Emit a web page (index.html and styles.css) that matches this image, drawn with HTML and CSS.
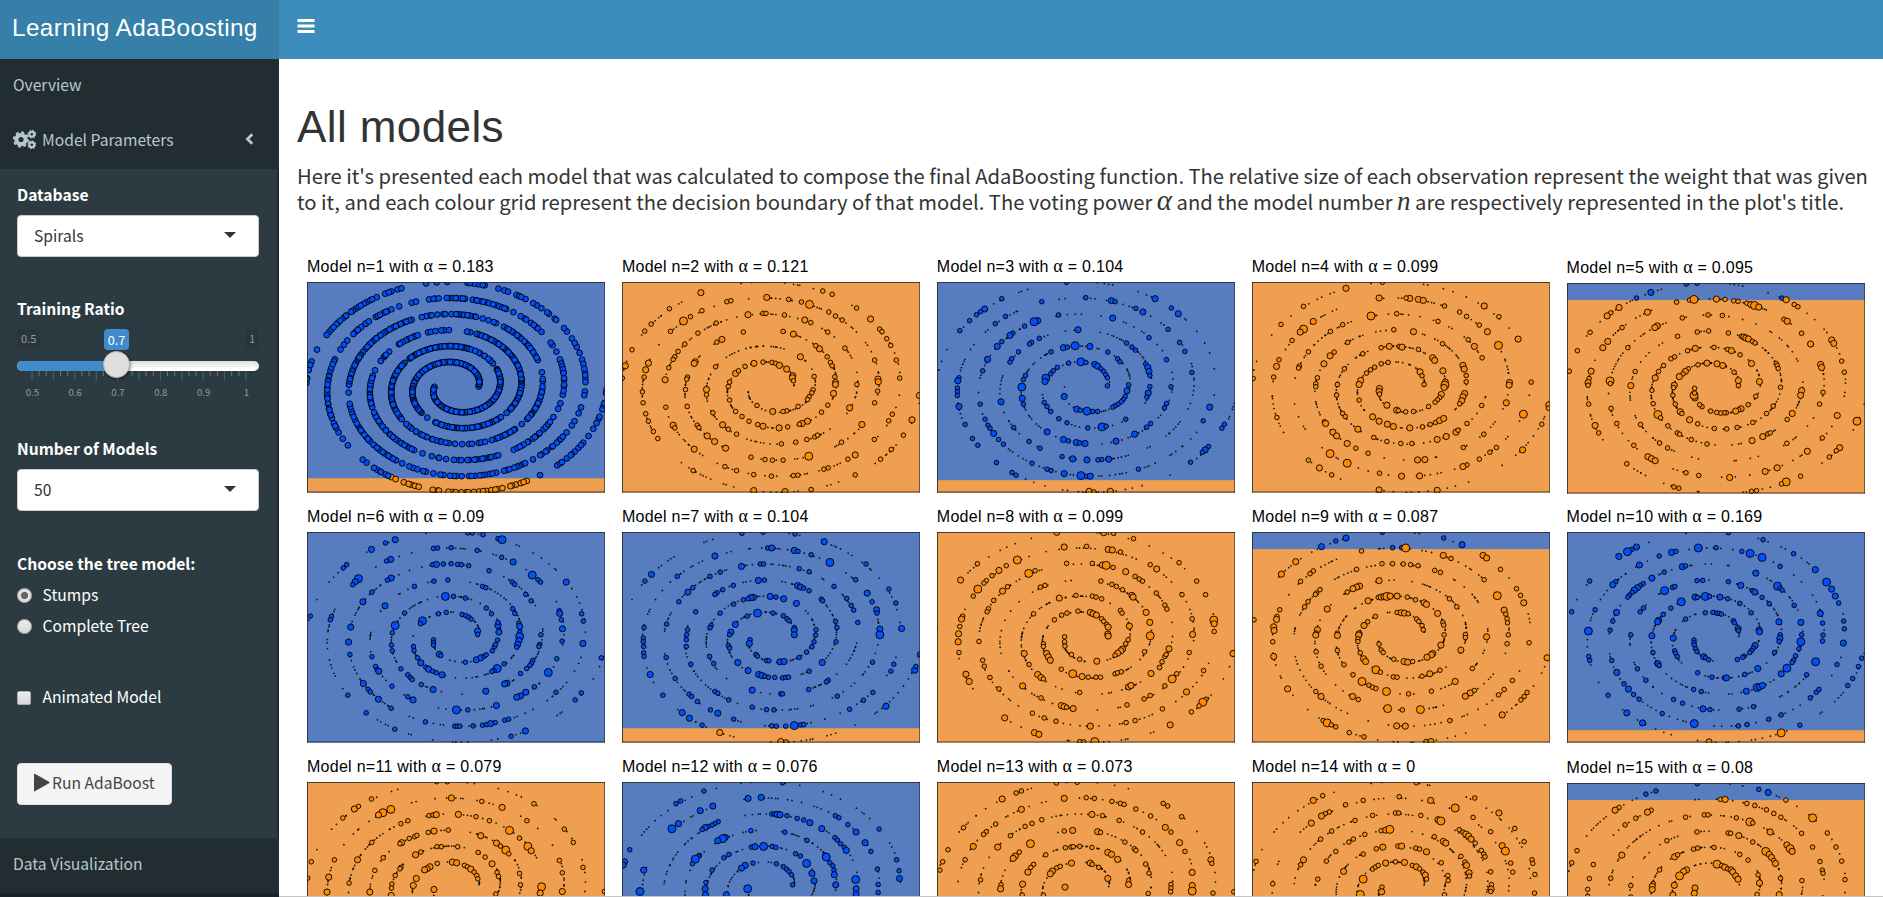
FILE: index.html
```html
<!DOCTYPE html>
<html lang="en">
<head>
<meta charset="utf-8">
<title>Learning AdaBoosting</title>
<link rel="stylesheet" href="styles.css">
</head>
<body>
<header class="topbar">
  <div class="logo">Learning AdaBoosting</div>
  <nav class="navbar">
    <svg class="burger" viewBox="0 0 18 14" width="18" height="14"><path d="M.5 1.5h17M.5 7h17M.5 12.4h17" stroke="#fff" stroke-width="3"/></svg>
  </nav>
</header>
<div class="body">
  <aside class="sidebar">
    <a class="item">Overview</a>
    <a class="item">
      <svg class="gears" viewBox="0 0 23 19" width="23" height="19" fill="none" stroke="#b8c7ce">
        <circle cx="8" cy="9.5" r="4.6" stroke-width="4"/>
        <circle cx="8" cy="9.5" r="7.1" stroke-width="2.2" stroke-dasharray="3 2.576"/>
        <circle cx="18.8" cy="4.2" r="2.4" stroke-width="2.2"/>
        <circle cx="18.8" cy="4.2" r="3.7" stroke-width="1.3" stroke-dasharray="1.6 1.306"/>
        <circle cx="18.8" cy="14.8" r="2.4" stroke-width="2.2"/>
        <circle cx="18.8" cy="14.8" r="3.7" stroke-width="1.3" stroke-dasharray="1.6 1.306"/>
      </svg>
      <span>Model Parameters</span>
      <svg class="angle" viewBox="0 0 9 12" width="9" height="12"><path d="M7.3 1.3L2.4 6l4.9 4.7" fill="none" stroke="#b8c7ce" stroke-width="2.8"/></svg>
    </a>
    <section class="submenu">
      <label class="label first">Database</label>
      <div class="select"><span>Spirals</span><i class="caret"></i></div>
      <label class="label ratio">Training Ratio</label>
      <div class="slider">
        <div class="bounds"><span>0.5</span><b>0.7</b><span>1</span></div>
        <div class="track"><div class="fill"></div><div class="handle"></div></div>
        <svg class="ticks" id="ticks" width="242" height="11"></svg>
        <div class="ticklabels"><span>0.5</span><span>0.6</span><span>0.7</span><span>0.8</span><span>0.9</span><span>1</span></div>
      </div>
      <label class="label number">Number of Models</label>
      <div class="select"><span>50</span><i class="caret"></i></div>
      <label class="label tree">Choose the tree model:</label>
      <div class="option"><i class="radio on"></i><span>Stumps</span></div>
      <div class="option"><i class="radio"></i><span>Complete Tree</span></div>
      <div class="option check"><i class="box"></i><span>Animated Model</span></div>
      <button class="run"><svg viewBox="0 0 17 19" width="17" height="19"><path d="M1 1.6Q1 .2 2.3.9L16 8.7q1 .8 0 1.6L2.3 18.1Q1 18.8 1 17.4z" fill="#444"/></svg><span>Run AdaBoost</span></button>
    </section>
    <a class="item">Data Visualization</a>
  </aside>
  <main class="content">
    <h1>All models</h1>
    <p class="intro"><span class="line">Here it's presented each model that was calculated to compose the final AdaBoosting function. The relative size of each observation represent the weight that was given</span><span class="line">to it, and each colour grid represent the decision boundary of that model. The voting power <i class="alpha">α</i> and the model number <i>n</i> are respectively represented in the plot's title.</span></p>
    <div class="grid" id="grid"></div>
  </main>
</div>
<script src="plots.js"></script>
</body>
</html>
```
FILE: styles.css
```css
* { box-sizing: border-box; }
body { margin: 0; height: 897px; overflow: hidden; display: flex; flex-direction: column; background: #fff; color: #333; font-family: "Noto Sans CJK SC", "Noto Sans", sans-serif; font-size: 15.65px; }
.topbar { display: flex; height: 59px; flex: none; }
.logo { width: 279px; padding-left: 12px; background: #367fa9; color: #fff; font: 24.3px/55px "Liberation Sans", Arial, sans-serif; letter-spacing: .4px; white-space: nowrap; }
.navbar { flex: 1; background: #3c8dbc; padding: 19px 0 0 18px; }
.burger { display: block; }
.body { display: flex; height: 838px; }
.sidebar { width: 279px; flex: none; background: #222d32; border-bottom: 4px solid #1b2428; color: #b8c7ce; overflow: hidden; }
.item { display: flex; align-items: center; height: 55px; padding: 0 25px 3px 13px; line-height: 24px; white-space: nowrap; }
.gears { margin: -1px 6px 0 0; }
.angle { margin-left: auto; margin-top: -3px; }
.submenu { height: 669px; width: 277px; background: #2c3b41; padding: 14px 18px 0 17px; color: #fff; display: flex; flex-direction: column; }
.label { display: block; font-weight: 700; height: 24px; line-height: 24px; white-space: nowrap; }
.first { margin-bottom: 8px; }
.select { height: 42px; flex: none; border: 1px solid #ccc; border-radius: 4px; background: #fff; color: #333; display: flex; align-items: center; justify-content: space-between; padding: 0 22px 2px 16px; }
.caret { border: 6px solid transparent; border-top-color: #333; border-bottom: 0; margin-top: -1px; }
.ratio { margin-top: 40px; }
.slider { margin-top: 8px; height: 74px; }
.bounds { display: flex; justify-content: space-between; height: 32px; font-size: 11px; line-height: 19px; }
.bounds span { height: 19px; padding: 0 4px; border-radius: 4px; background: #293539; color: #999; }
.bounds b { height: 21px; width: 25px; margin-left: -52px; text-align: center; line-height: 22px; font-weight: 400; font-size: 12.6px; color: #fff; background: #428bca; border-radius: 4px; }
.track { height: 10px; border-radius: 8px; background: linear-gradient(#dedede, #fff 80%); position: relative; }
.fill { width: 99px; height: 10px; border-radius: 8px 0 0 8px; background: #428bca; }
.handle { position: absolute; left: 86px; top: -10px; width: 27px; height: 27px; border-radius: 50%; background: #dedede; border: 1px solid #b5b5b5; box-shadow: 1px 1px 3px rgba(0,0,0,.4); }
.ticks { display: block; }
.ticklabels { display: flex; margin-top: 2px; margin-left: -6px; font-size: 9.6px; line-height: 16px; color: #999; }
.ticklabels span { width: 42.8px; text-align: center; flex: none; }
.number { margin-top: 34px; margin-bottom: 8px; }
.tree { margin-top: 41px; margin-bottom: 4px; }
.option { display: flex; align-items: center; height: 31px; line-height: 24px; gap: 10.5px; white-space: nowrap; }
.option span { margin-top: -2px; }
.radio { width: 15px; height: 15px; border-radius: 50%; border: 1px solid #b0b0b0; background: linear-gradient(#ececec, #d8d8d8); }
.radio.on { background: radial-gradient(circle, #666 0 3.2px, #e0e0e0 4px); }
.check { margin-top: 40px; gap: 11.5px; }
.box { width: 14px; height: 14px; border: 1px solid #aaa; border-radius: 2px; background: linear-gradient(#ececec, #d6d6d6); }
.run { margin-top: 50px; width: 155px; height: 42px; flex: none; display: flex; align-items: center; padding: 0 0 2px 15px; gap: 2px; border: 1px solid #ddd; border-radius: 4px; background: #f4f4f4; color: #444; font: 15.65px/24px "Noto Sans CJK SC", sans-serif; white-space: nowrap; }
.run svg { margin-top: -1px; }
.content { flex: 1; padding: 43px 0 0 18px; overflow: hidden; border-bottom: 1px solid #c4c4c4; }
h1 { margin: 0; font: 44px/50px "Liberation Sans", Arial, sans-serif; letter-spacing: .4px; }
.intro { margin: 11px 0 0; font-size: 20.2px; line-height: 26px; }
.line { display: block; height: 26px; white-space: nowrap; }
.line i { font: italic 27px/20px "Liberation Serif", serif; }
.line .alpha { font-size: 29px; }
.grid { display: grid; grid-template-columns: repeat(5, 298.4px); column-gap: 16.5px; margin: 39px 0 0 10px; }
.cell { height: 250px; }
.cell.low { padding-top: 1px; }
.title { height: 28px; font: 16px/25px "Liberation Sans", Arial, sans-serif; letter-spacing: .27px; color: #000; white-space: nowrap; }
.title span { font-family: "Liberation Serif", serif; font-size: 18px; line-height: 20px; }
.plot { display: block; }
```
FILE: plots.js
```js
// Runs of observations along the spiral arms: x1,y1,x2,y2,count (counter-clockwise).
const RUNS = `565,410,473,338,60 468,338,380,384,30 380,384,390,487,38 395,489,412,503,2 435,519,447,525,3 455,526,624,505,35
630,500,647,488,2 655,477,692,385,24 692,385,655,307,18 655,307,560,252,22 541,247,531,245,2 477,241,413,246,6 384,257,328,284,10
298,306,268,332,5 257,362,257,362,1 247,378,246,472,17 252,488,372,602,24 398,610,398,610,1 425,620,514,632,7 532,631,625,617,12
670,599,785,518,17 795,503,808,460,3 816,435,818,370,7 818,370,805,330,7 798,306,778,280,3 753,247,690,201,8 670,187,670,187,1
648,178,548,149,13 525,146,470,144,8 446,145,417,148,4 378,155,365,158,2 327,169,327,169,1 305,179,256,200,7 236,214,189,252,8
172,272,152,299,3 137,329,122,362,5 119,375,124,495,17 126,505,148,547,5 160,566,175,586,2 219,629,230,638,2 252,654,296,676,6
303,683,317,688,2 341,698,386,711,5 428,720,447,723,3 475,727,637,715,14 661,709,710,693,6 750,676,750,676,1 800,646,877,578,10
893,558,893,558,1 906,536,925,500,4 932,478,938,460,3 941,430,944,420,2
433,411,555,480,60 560,478,612,440,24 612,440,620,358,36 607,342,565,310,8 555,305,545,298,2 537,297,360,327,46 346,340,310,375,12
308,378,308,462,24 308,462,337,507,12 350,522,476,580,17 495,582,495,582,1 516,582,546,581,3 565,577,605,570,4 617,566,675,538,12
693,522,711,508,2 718,505,755,420,16 753,410,755,388,3 752,368,752,368,1 740,332,735,317,3 730,307,640,233,18 618,220,595,212,3
578,206,578,206,1 558,201,498,192,10 484,192,460,192,3 442,194,395,201,5 365,210,225,297,26 218,307,178,405,19 178,428,178,428,1
180,462,187,482,3 190,492,205,530,5 212,537,318,632,20 337,641,337,641,1 358,650,408,665,5 430,672,460,676,3 480,678,515,680,4
537,680,618,668,9 641,662,705,640,8 728,628,728,628,1 750,616,822,562,10 832,549,852,514,3 863,490,868,472,2 878,436,880,425,2
882,397,875,330,7 866,310,843,267,4 830,245,820,236,2 797,211,768,190,4 753,176,730,159,3 706,148,680,134,4 654,126,625,116,3
584,106,532,101,6 472,98,472,98,1 440,98,440,98,1 408,100,408,100,1 334,115,286,132,5 260,142,112,256,20 83,300,83,300,1
67,335,60,361,3 55,385,56,400,3`;

// Heavier observations per model. Suffix b = medium, c = large; f = axes extent of the coordinates.
const MODELS = [
{a:'0.183', bg:'b', low:.932},
{a:'0.121', bg:'o', f:[37,97,893,631], p:`273,129b 179,177 124,223 105,244 67,300 47,348b 38,385 351,156 363,153 276,183 221,214c 242,201 182,245 470,143b 536,149 574,157 598,164c 638,124 666,134 656,187 676,199 696,211 739,175 781,208b 414,195b 459,191 468,191 523,196 584,211b 602,219 319,220 264,250 400,247 519,245 550,253b 653,247 704,295 336,269b 321,277 225,283 205,305 195,321 190,329 177,354 116,340b 108,360b 103,382 166,390b 98,426 100,459 108,492 116,514 131,545 144,566 256,336b 253,341b 317,351 233,382 231,388 227,419 290,419b 290,435 571,321b 628,297b 617,288 651,321 661,338 666,348 674,381 676,398b 676,404b 670,431b 653,466 634,487 592,514b 576,521b 568,523 533,531 507,534b 459,529b 443,524 417,514 396,500 377,485 359,451 355,410 359,397 377,371b 386,363 405,350 432,341b 459,337 486,338 497,341 508,347b 530,358b 548,378b 547,384b 550,393 612,380 609,420 605,429 597,441 592,449 564,470 530,483 519,485 488,485b 441,467 168,472 232,470 309,489 190,526b 195,534 262,526 267,533 338,525b 355,538 380,553 292,558b 314,575b 253,598b 347,595b 514,582 557,577 590,569 614,561 622,556 718,474b 740,404 793,331 803,388b 804,396b 802,424 793,459 808,238 815,246 829,267 841,287 858,331 868,385 927,437b 905,510b 846,493 835,513 879,556 843,599 811,628 792,569 755,524b 694,577 735,615b 713,628 735,675 596,619c 654,654 641,658 563,676 550,677 519,631 487,631 465,629 423,622 345,650 380,662 431,674 484,679 250,662 431,722b 525,725b 603,719`},
{a:'0.104', bg:'b', low:.941, f:[28,97,732,631], p:`346,98 187,147 145,178b 135,186 125,195 108,213 84,243 285,156 196,200 171,222 214,250 207,257b 187,276 176,290b 152,329b 140,363 275,213b 266,216c 243,229 326,196 393,144 456,153b 465,156 516,176 533,187b 563,147b 603,175 620,192b 595,239 548,264 623,278 636,305 591,330 653,368 459,205b 374,240b 279,266 260,278 255,283 228,306 211,327 207,337 245,377 240,389 236,412c 237,446b 240,463 308,306 338,294b 348,292 367,288c 403,290b 447,307 471,327 477,336 493,280 506,292 515,301 540,343 545,353b 548,365b 550,377 550,410 546,430b 543,442 498,405 494,423b 490,440 485,449 480,456 472,463 465,468 459,472 381,336c 393,338 351,340 323,353 313,363 307,372 295,385c 293,395b 415,344b 422,349b 430,357 437,365 442,375 446,384 446,408 340,440b 291,458 298,470 307,485 327,507 347,519 371,478b 380,481 396,484c 410,485 422,485 433,531c 443,529 398,534 491,508 82,384 79,393b 78,415 78,426 78,437 82,470b 97,524 115,566 128,586 134,463 185,456b 146,508 153,526 158,535 167,551b 179,569 191,583 216,533 298,546b 254,575 281,595 338,569b 350,573 370,578b 378,579 391,581b 467,574b 513,553b 542,532 552,521 591,461 586,474 602,411 697,472b 681,513 733,523 727,535 694,590 686,600b 679,607 650,637 522,658 449,628b 432,629 423,630 396,630b 361,627b 335,620 261,640 298,658 308,662 340,671b 381,677c 395,679 404,679b 174,638 212,668 222,676 401,724b 413,726 453,724b`},
{a:'0.099', bg:'o', f:[801,97,730,631], p:`1031,116b 1120,98 927,170 872,224 1112,145b 1187,146b 1178,145 1208,149b 1220,152b 1272,169 1309,187 1326,200 1369,169b 1405,201 951,215b 927,238c 919,247b 899,272 1023,225 993,245 1092,199c 1155,192 1256,215 1357,226 1377,246b 1330,270 1345,290b 1452,268b 1404,287c 1148,240 1196,246b 1035,278 1002,307 992,318b 977,342b 939,306 917,349 915,355 867,330 861,350b 854,382 804,386 1027,357 1010,404 1008,436 961,384 957,402 957,411 1137,290b 1117,294 1072,312 1161,290 1168,292b 1208,299 1267,282 1243,324b 1248,332b 1268,363b 1274,397b 1273,406c 1271,413b 1264,434b 1260,443 1255,450 1249,457 1233,470 1317,347b 1320,358b 1325,377 1325,396 1321,431b 1317,441b 1314,453b 1309,462 1134,338 1117,342 1101,352 1091,360 1081,370 1067,392b 1063,404b 1212,366b 1217,378 1222,404 1113,416b 1112,425b 1113,433 1131,466b 1063,451 1096,501b 1112,514b 1132,523b 1147,530b 1187,534b 1218,531 1237,524 1250,518 1260,512b 1270,506b 1155,481b 1159,482 1177,486 1196,485 1023,491 1029,500 978,516 981,521b 999,547b 1008,558b 1034,581b 1055,595 1060,538b 1099,563 1131,575 1165,581 1192,581 1254,569b 1276,560b 1300,547b 1305,541 1327,521 1363,467 1364,324 1431,398b 1430,406b 1423,459b 1484,397 1465,493c 1527,465b 1526,475 1510,523 1463,600b 1399,593 1383,607 1357,628 1368,553 1318,593 1327,645 1317,650b 1206,630b 1224,629b 1211,678b 1167,679b 1113,670 1034,640c 992,611c 939,631 966,654b 996,675 1085,610 1112,720b 1254,721b 862,503`},
{a:'0.095', bg:'o', high:.081, low1:true, f:[50,100,893,628], p:`301,128b 258,145 407,103 439,101 693,145 706,150b 206,173b 181,189 170,198b 119,247 81,302 57,363 378,157 417,151 430,149c 497,148b 523,149 549,153 562,155 588,160 600,164b 611,167c 624,172b 730,164 741,171 699,208 709,214b 752,250 779,282b 842,270b 848,280b 872,333 880,366 291,187b 215,233 172,274b 157,293b 320,228b 313,233b 395,204 472,195 515,197 381,259 440,246 474,243 533,249 572,259 579,261b 585,264b 593,267b 605,274 613,279 232,293 434,295b 411,302 490,292 531,298 542,302b 568,314 602,340b 372,320 361,326 339,346 324,364 314,383b 304,420 308,460 254,364 241,406b 122,363b 116,385 113,397b 113,405 115,461 134,525b 145,547 179,392c 180,400 182,474 199,519 469,339b 499,341b 516,346b 442,344 413,356 404,364b 397,371 386,379b 371,405b 369,412 367,435 374,461 389,484b 394,489 417,508b 441,520 491,534 528,535 559,531 606,516 647,489 667,467 689,411 550,366 563,391b 563,406 626,394b 615,438 592,463 571,475b 564,478 555,482b 527,487 520,487 510,488 498,486 480,482 454,469 447,463 433,443b 430,435c 432,428 432,414 676,340 679,346 682,355 809,343b 812,352b 816,426 806,461 752,421b 749,435b 724,489b 709,507 322,492c 330,502 352,526 380,547 387,551 422,567 469,580 604,570b 636,558b 651,550 658,547 708,578 814,562 859,495b 918,512c 866,591b 856,600 835,619 769,602b 679,651b 643,662b 749,676 706,693c 692,699 270,522 327,577 351,592 292,618b 303,624b 314,630b 250,584 229,639 406,666 444,674 537,680b 370,708 385,712 602,721 617,719`},
{a:'0.09', bg:'b', f:[42,97,731,631], p:`258,120b 234,130 200,149b 139,195 131,205 247,179b 237,184 168,237c 160,246b 154,255 352,146 362,145 395,144 459,152 436,100 447,100 473,105 510,117 520,120c 519,173 547,187b 594,226c 608,240 614,247 677,247b 350,195 359,194b 376,193 395,192 411,194 420,195 438,198 488,213 545,247 551,254 248,235b 239,241 201,277 179,306b 233,318b 305,260 353,244 387,241 472,260 480,264 578,284 591,303 381,290c 401,290 430,295 481,325 494,342 546,327 551,341 281,340 258,377c 251,399 249,436 251,453 149,382b 144,427b 147,464 201,471 102,350 99,360 50,349 383,338 364,342 325,363c 320,372 422,344 431,348 438,352 444,358 460,394b 460,404 352,420 352,428 352,436 366,463b 370,467 430,487 457,480b 468,474b 476,469 481,465 496,453 501,441 504,434 509,421 512,397b 510,377b 510,368 561,370 563,380b 563,397 563,410c 561,422b 558,434b 556,442 615,405 612,434 610,440 595,482 592,490 588,497 580,506 565,521 525,492 508,506c 500,512 495,515 532,550b 526,552b 480,574b 599,561 578,577b 565,588b 556,592b 506,617b 436,630 408,630c 303,440 304,452 313,474 321,489b 333,502 340,508b 350,514 359,519 373,525b 272,507 289,525 295,533 300,539 322,554 351,569b 289,591 302,600b 210,500 214,510 218,514b 180,551b 192,569 197,576 217,598b 250,559 142,586 248,625 187,639 257,688 332,666 404,679 410,679 416,679 449,678 472,676 482,674 492,671b 503,668 526,661 536,658 577,693b 542,709 660,333 661,341b 665,360 668,387b 667,424 715,342 719,364 718,431b 654,477 633,518c 652,577 714,579 699,600 763,474`},
{a:'0.104', bg:'b', low:.932, f:[814,97,729,631], p:`1107,101 1159,98 1237,103 1308,126b 886,224b 870,244 1041,169b 949,230 1170,145 1180,145b 1235,152b 1244,155 1276,165 1322,188c 1410,193 1106,200b 1054,217 1029,230 1152,193 1160,193 1247,207 1271,216 1385,240 1332,260 1413,280b 1466,268 1483,310 987,264 975,277b 953,306 994,336 923,373 868,383 1086,257 1060,270 1046,279 1041,284 1147,242b 1162,241 1243,258b 1250,262b 1258,265 1271,273 1301,298 1304,303 1135,293b 1129,294b 1122,297 1110,300 1087,313 1054,340 1176,290b 1190,292 1209,297b 1240,311b 1363,296 1374,317 1380,331 1390,368 1425,306 1436,330b 1437,340 1444,388b 1444,405c 1497,386b 1032,377 1029,384 1091,374b 1080,397b 1077,405 1074,437 1077,445 1145,340c 1120,349 1183,340 1208,348 1217,357 1222,363 1235,383 1235,391b 1235,405b 1336,365 1339,383 1337,426 1288,390 1287,406 1283,426 1278,441 1265,457 1247,473 1127,420 1125,431b 1141,464 1145,469 1167,482 1173,483 1200,486b 1210,485b 1303,488b 1271,514 1097,488b 1122,512b 1148,524b 1156,527b 1163,529 1172,532 1187,533 1206,534 1214,533 1221,532 974,390 972,405 971,420 971,440 982,493 866,415 866,426 867,440 867,459 868,470 883,524b 914,586 1038,491 1028,470 922,473 944,536 1318,541 1313,546 1270,569 1202,582 1206,582 1132,571b 1041,575 1048,580 1075,600 978,583 984,590 998,605 1030,630 1048,640b 961,638b 979,655b 1010,676 1087,658 1132,622 1167,629 1185,630 1180,678 1191,679 1214,679 1235,677c 1250,675 1258,674 1426,487 1478,493 1471,514 1529,511b 1532,500 1541,463 1427,578 1404,601 1340,589 1370,628 1459,619b 1053,698b 1202,725b 1215,726`},
{a:'0.099', bg:'o', f:[28,97,732,631], p:`322,98b 127,192 86,241b 340,142b 437,99b 461,101 510,117 225,181c 198,198 180,212b 163,228 149,243 143,250 128,268c 117,289 395,140 448,149b 458,151b 478,157 269,213 253,221c 201,261 189,274b 346,191 409,191 434,196b 443,197c 460,203 491,216b 551,195 567,208b 622,189 665,244 687,285 514,230 524,238 532,244 430,244 457,254 468,260 483,270 506,287b 509,292b 566,280 587,316 592,328 629,285 654,357 167,302 154,327 151,336 282,262 293,257 369,287 328,295b 409,289 418,292 432,297 478,332 482,340 541,338b 265,342 91,349 88,358b 84,380 81,402b 80,426b 82,458 131,425 374,334 347,340 334,346 316,360 404,338b 411,342b 419,346b 432,357 437,365 444,374 448,382b 447,403b 448,409b 341,411 341,426 342,439 358,464 378,478 420,484b 500,379b 550,368b 551,408c 537,456 497,420 491,432 483,448b 479,453b 471,460b 465,466 289,432 289,440 297,461b 301,471b 306,481b 333,508 361,522c 384,530b 399,532 418,532 429,532 465,522 471,519 480,516 242,461b 254,494 275,524b 283,533b 289,537 238,558b 283,594 378,578 498,561b 504,557b 551,587 536,597 553,521b 574,503 580,486 587,470 590,464 597,447b 655,404b 647,458 605,537c 616,522 587,558 640,576b 682,512 707,361c 708,372b 708,395 754,461b 99,523b 107,545b 140,481 144,499 158,533 180,567 194,654b 262,640 291,654 320,664 333,617b 340,620b 346,622 362,626b 404,679b 494,615 581,627 492,668 514,662 600,675b 688,598 680,607c 671,618 652,636 267,698b 278,703b 378,725 388,726 415,725c`},
{a:'0.087', bg:'o', high:.081, f:[801,97,730,631], p:`1031,115b 1006,124 971,141b 1120,98 1270,115 1315,135b 908,186b 873,223b 1069,154 1145,144 1167,144 1177,145c 1269,167b 1288,176 1366,167b 1375,175b 1409,209 951,214 943,222 920,245 1057,209 1119,192 1145,192 1171,193 1189,195 1207,198 1248,212 1262,218 1369,240 1448,267 1458,287 1466,309b 1401,288c 1418,331b 1422,343 1425,357 1426,369 1112,243b 1064,259b 1057,262b 1048,267b 1034,277 967,270 959,280 956,284 938,306 930,321 985,328b 869,330 862,350 861,359b 854,381b 855,392b 852,426 854,470b 806,360 1085,303b 1110,293 1117,292b 1124,291b 1131,290c 1139,289b 1156,289b 1181,292 1201,300 1222,309b 1228,314b 1255,341b 1284,297 1302,321 1268,368 1270,376 1271,405 1263,436b 1243,461b 1240,465b 1229,472b 1323,404 1323,413 1312,451b 1375,411b 1428,405 1425,432 1479,429 1103,350 1084,366 1075,377b 1063,402b 1062,406b 1060,417 1060,425 1156,338 1166,339b 1174,340b 1183,342 1204,358 1209,365 1217,377 1220,390 1112,433 1117,451 1122,458 1148,478 1173,485b 1182,487b 1194,485 1066,459 1074,477b 1079,485b 1104,510c 1115,517 1147,531 1156,532 1217,529 1236,522b 1261,511 961,390b 958,400 957,406b 1010,400 1010,407b 1010,452 958,456 970,499 1026,495 1048,525 1070,545c 1087,556 1096,562 1104,566 1130,575c 1184,582 1240,574 1298,545b 1340,506 1323,589b 1335,579b 1345,572 1438,542 1418,569 1404,585 1413,645b 1459,600 1467,590 1474,578 1523,474b 888,567b 957,575 970,590b 1047,590b 1061,599 1133,626c 1169,630 1213,629c 1285,662 1155,678b 1176,679b 975,662 985,669c 995,675 1006,681 1039,698 1075,711 1227,725 1239,725b`},
{a:'0.169', bg:'b', low:.941, f:[50,97,893,631], p:`258,142b 244,149 231,156c 205,170b 118,244 64,336 533,99 637,120 326,169 363,158b 376,155 443,145c 496,144 573,155 598,161c 634,173c 728,162 793,210b 827,247c 842,268b 853,289b 863,310 688,200 267,196b 196,246 187,255b 278,252 269,258 261,264b 251,271b 245,278 237,286 232,292 304,235b 341,217 395,201b 405,199 615,220b 680,259c 688,265 694,271 730,317 439,243 456,242 533,246 570,257b 605,273 612,277b 634,293 655,312 342,273c 366,263 373,260 279,325 269,336 198,338b 187,364 179,391 134,330 114,394c 115,470 118,482 392,306c 361,325 338,344 324,362b 321,366b 304,408b 433,292b 440,293 464,290c 477,290 508,292b 531,297 567,311 601,339 464,339 487,338 498,340 505,341 512,343 405,358 368,415b 548,363 551,369 562,387b 563,392 625,391b 626,396b 613,437b 608,445 602,452 597,458 580,469 576,472 560,479 430,421 430,429 431,436 435,447 439,455 459,471b 465,474 474,480 684,366b 688,405 687,416b 685,425 671,458 621,506b 582,524 750,368b 752,405 750,426c 744,447 734,468 728,481 724,488 708,505c 691,522b 808,341b 815,370 816,406 815,424 878,364 880,387 877,430b 794,486c 858,494 767,525 241,405 261,507 307,458 319,490 322,492b 326,497 372,453 375,460 380,470 441,519 484,532 521,534 527,534b 286,541 184,482 199,518b 221,552 234,568b 249,584 266,598 173,586 429,569 452,575 587,574b 619,563c 626,561b 635,557b 369,599 396,610 457,627b 478,629 565,628 608,620 335,641 229,639b 276,669b 431,671c 563,678 589,674 654,658 691,645 747,676 778,594 796,577 804,569 890,557 905,536 922,500 932,475 691,699c 475,726b`},
{a:'0.079', bg:'o', f:[52,127,893,631], p:`245,178 206,200 194,208b 159,235 440,126 472,126 303,209c 279,219c 266,226b 484,175b 575,185 636,203b 731,192 354,243 333,252 417,228 429,226 439,225b 505,224b 558,231 598,243 710,243 246,308 203,360b 134,360 65,366 54,415 117,412b 112,457b 178,430 240,457b 255,392 280,354 335,309b 330,312 358,296 374,291 381,287 415,278 432,274b 475,271 572,288b 619,310b 631,319 647,331c 656,342 658,272c 688,295 713,320c 723,333b 822,268 849,308 878,383 807,362 816,399 816,455b 754,441c 750,460b 377,345b 393,337 441,321 454,321 503,321 564,338 585,352 606,372b 621,398 625,410 688,401 691,435 617,463 442,371 420,381b 411,387b 404,390b 379,416b 370,437b 487,367b 500,369b 523,377 532,381 542,388b 552,397 560,407 563,417 333,383 330,387 316,407 306,433 305,445 304,467b 432,449b 942,455`},
{a:'0.076', bg:'b', f:[814,847,729,631], p:`1014,874 957,904 946,912 833,1050 820,1086b 817,1096b 1206,849 1122,896b 1154,893b 1036,919b 1005,933b 952,972b 936,987c 1442,988 1049,966 1041,971 1034,976 1024,980 1017,984b 1010,989 1180,943 1186,943 1193,944b 1200,945b 1217,948 1242,956 1258,961 1273,969b 1335,948 1344,954 1366,975 1386,997b 1302,987b 1129,993 1212,997 1266,1022 1334,1014 1340,1021 1348,1032 1357,1043 1362,1052b 1408,1029b 1422,1055 1485,1080 1066,1013b 1060,1017c 1048,1023b 1003,1067 1001,1070 993,1078c 986,1092 867,1111b 1130,1042 1139,1041b 1160,1040c 1181,1040 1190,1043 1238,1062 1250,1069 1265,1091c 1278,1121b 1283,1143b 1310,1066 1313,1072c 1322,1089 1329,1098 1332,1111 1333,1125b 1336,1155b 1385,1139c 1386,1167b 1438,1108 1440,1154 1440,1178 1491,1113 1492,1136b 1075,1064 1063,1074 1034,1111 1019,1148 1017,1167b 1018,1185b 1134,1090 1115,1097b 1106,1105b 1191,1092 1208,1101 1216,1108 1222,1115 1228,1125 1231,1155 858,1175c 1069,1185b 1121,1167c 1386,1183b`},
{a:'0.073', bg:'o', f:[28,847,732,631], p:`321,850 372,848 235,874 222,880 188,898b 340,896b 394,894 414,896 457,905 478,911 487,914 516,928 583,911 594,919 628,951 235,929b 172,973 149,996 142,1004 93,984 117,1040b 55,1050 408,944b 434,948 475,962 552,949 588,983b 602,997 285,960 261,971 244,980 208,1008 177,1042b 532,997 623,1029b 636,1055 700,1080b 702,1091 340,994 361,992b 422,996b 429,998 257,1032c 230,1057 220,1069b 215,1076b 489,1027 512,1047 516,1052 540,1093 548,1120 546,1181 343,1044 357,1042 362,1041 378,1040 408,1043 447,1058b 456,1064b 471,1079b 358,1090b 404,1090b 409,1094 425,1103 322,1104 330,1100 311,1114b 306,1122b 295,1065 265,1094 258,1103 251,1117b 238,1153b 237,1186 97,1080 42,1086 35,1111 135,1140 185,1155 184,1167b 289,1186 342,1162b 447,1136b 498,1142 498,1154b 602,1154 602,1165 601,1176 654,1118b 654,1157b 654,1174c 705,1180 756,1176`},
{a:'0', bg:'o', f:[801,847,730,631], p:`1203,849 974,888 951,902b 1073,902 1030,915 990,937 980,942 971,949b 946,970b 1161,891 1238,902b 1298,925c 1346,895 1405,940b 1342,953 1444,986 1467,1026 1096,947 1053,962 1152,940 1160,940 1214,947 1256,960b 1263,964c 1308,990 1317,997 1324,1003b 1331,1009b 1337,1018b 1347,1030 1362,1052 1368,1063 1371,1071 1385,996 1413,1038b 1421,1054c 996,994 969,1018 927,1080b 920,1095 1049,1018 1038,1027 1117,993 1128,991b 1138,989c 1077,1004 1247,1011 1269,1025b 1275,1030b 1312,1070 1322,1087 1326,1097b 1332,1119b 1333,1129 1385,1116 1387,1154 1386,1168b 1385,1175 1434,1090 1439,1117 1486,1080 1488,1091 1493,1124 1492,1180 1006,1055 1073,1063 1105,1047 1121,1042b 1158,1039 1167,1039b 1202,1045 1211,1048 1228,1056b 1264,1089 983,1084 1025,1115b 962,1138 852,1152 811,1085 1096,1108 1103,1102 1110,1097 1128,1090b 1152,1086 1174,1088b 1193,1097 1203,1101b 1211,1107 1219,1117 1225,1126b 1228,1138 1073,1138c 1066,1184c 1119,1162 1118,1176b 1280,1127 1281,1142 1272,1185`},
{a:'0.08', bg:'o', high:.081, low1:true, f:[50,850,893,628], p:`440,852 316,874 286,883 624,869 652,878b 705,901 206,923 194,931b 302,931 291,937b 256,955 224,975 80,1052 64,1088 509,899 523,899b 588,911 612,917 647,930 669,941 690,952 785,954c 829,999 752,1000 405,952 461,945 472,945 557,954 597,966c 606,969 658,996b 708,1035b 718,1046c 724,1054b 785,1041 855,1041 349,1022 439,996 532,999 540,1000 564,1007b 606,1026 645,1054c 655,1063b 662,1072b 669,1081 674,1090b 214,1065b 129,1093 117,1135 112,1167 181,1134 372,1070b 381,1064 429,1047 441,1044 490,1042 567,1063 592,1080 499,1092c 513,1096 522,1101b 531,1106 541,1109b 546,1115b 555,1127b 562,1137b 408,1109b 399,1114b 387,1127c 371,1155b 327,1109 308,1150 305,1158b 305,1168b 241,1156 622,1124 626,1148b 685,1183b 689,1134 753,1141 807,1084 814,1110 816,1119 872,1083 882,1138 433,1163b 431,1179b 619,1182 367,1184b 241,1190 112,1188`}
];

const W = 298.4, H = 210.6;
const CX = 499, CY = 412, R0 = 66, STEP = 64, SQUASH = 0.753;
const FILL = { b: '#577dc0', o: '#f09f50' };
const POINT = { b: '#0050ff', o: '#ff8c00' };

function rng(seed) {
  return () => {
    seed = (seed * 1664525 + 1013904223) >>> 0;
    return seed / 4294967296;
  };
}

// Finds arm (0 or 1) and phase for a location.
function locate(x, y) {
  const dx = x - CX, dy = (CY - y) / SQUASH;
  const r = Math.hypot(dx, dy), ang = Math.atan2(dy, dx);
  let best = null;
  for (let arm = 0; arm < 2; arm++)
    for (let k = -1; k < 5; k++) {
      const t = ang - arm * Math.PI + 2 * Math.PI * k;
      const err = Math.abs(R0 + STEP * t / Math.PI - r);
      if (!best || err < best.err) best = { arm, t, err };
    }
  return best;
}

function basePoints() {
  const rand = rng(11), pts = [];
  for (const run of RUNS.trim().split(/\s+/)) {
    const [x1, y1, x2, y2, n] = run.split(',').map(Number);
    const s = locate(x1, y1);
    const e = locate(x2, y2);
    let span = e.t - s.t;
    if (e.arm !== s.arm || span < 0) span = 0;
    for (let i = 0; i < n; i++) {
      const jitter = n > 2 && i > 0 && i < n - 1 ? (rand() - .5) * 1.1 : 0;
      const t = s.t + (n > 1 ? span * (i + jitter) / (n - 1) : 0);
      const r = R0 + STEP * t / Math.PI, a = t + s.arm * Math.PI;
      pts.push([(CX + r * Math.cos(a) - 52) / 893, (CY - r * Math.sin(a) * SQUASH - 97) / 631, t]);
    }
  }
  return pts;
}

const base = basePoints();
const other = c => c === 'b' ? 'o' : 'b';

function drawPlot(m, index) {
  const rand = rng(index * 977 + 5);
  const colour = y => POINT[(m.low && y > m.low - .007) || (m.high && y < m.high - .006) ? other(m.bg) : m.bg];
  let s = `<rect width="${W}" height="${H}" fill="${FILL[m.bg]}"/>`;
  if (m.low) s += `<rect y="${m.low * H}" width="${W}" height="${(1 - m.low) * H}" fill="${FILL[other(m.bg)]}"/>`;
  if (m.high) s += `<rect width="${W}" height="${m.high * H}" fill="${FILL[other(m.bg)]}"/>`;
  const circle = (x, y, r) => `<circle cx="${(x * W).toFixed(1)}" cy="${(y * H).toFixed(1)}" r="${r}" fill="${colour(y)}" stroke="#000" stroke-opacity=".9" stroke-width="1"/>`;
  if (!m.p) {
    const order = base.map(p => [rand(), p]).sort((a, b) => a[0] - b[0]);
    for (const [, p] of order) s += circle(p[0], p[1], 2.9);
  } else {
    for (const p of base)
      if (rand() < (p[2] < 3.2 ? .25 : p[2] < 7 ? .38 : .48)) s += `<circle cx="${(p[0] * W).toFixed(1)}" cy="${(p[1] * H).toFixed(1)}" r=".9" fill="#000" fill-opacity=".85"/>`;
    for (const token of m.p.split(/\s+/)) {
      const [x, y] = token.split(',').map(parseFloat);
      const r = token.endsWith('c') ? 4 : token.endsWith('b') ? 3.1 : 2.3;
      s += circle((x - m.f[0]) / m.f[2], (y - m.f[1]) / m.f[3], r);
    }
  }
  s += `<path d="M.5 0V${H}M0 .5H${W}M0 ${H - .6}H${W}M${W - .6} 0V${H}" stroke="#222" stroke-opacity=".8"/>`;
  return `<svg class="plot" width="${W}" height="${H}" viewBox="0 0 ${W} ${H}">${s}</svg>`;
}

document.getElementById('grid').innerHTML = MODELS.map((m, i) =>
  `<div class="cell${m.low1 ? ' low' : ''}"><div class="title">Model n=${i + 1} with <span>α</span> = ${m.a}</div>${drawPlot(m, i + 1)}</div>`).join('');

let ticks = '';
for (let i = 0; i <= 30; i++) {
  const x = 14.5 + i * 7.133, major = i % 3 === 0;
  ticks += `<rect x="${x.toFixed(1)}" width="1" height="${major ? 10 : 5}" fill="${major ? '#37648a' : '#6b7578'}"/>`;
}
document.getElementById('ticks').innerHTML = ticks;
```
